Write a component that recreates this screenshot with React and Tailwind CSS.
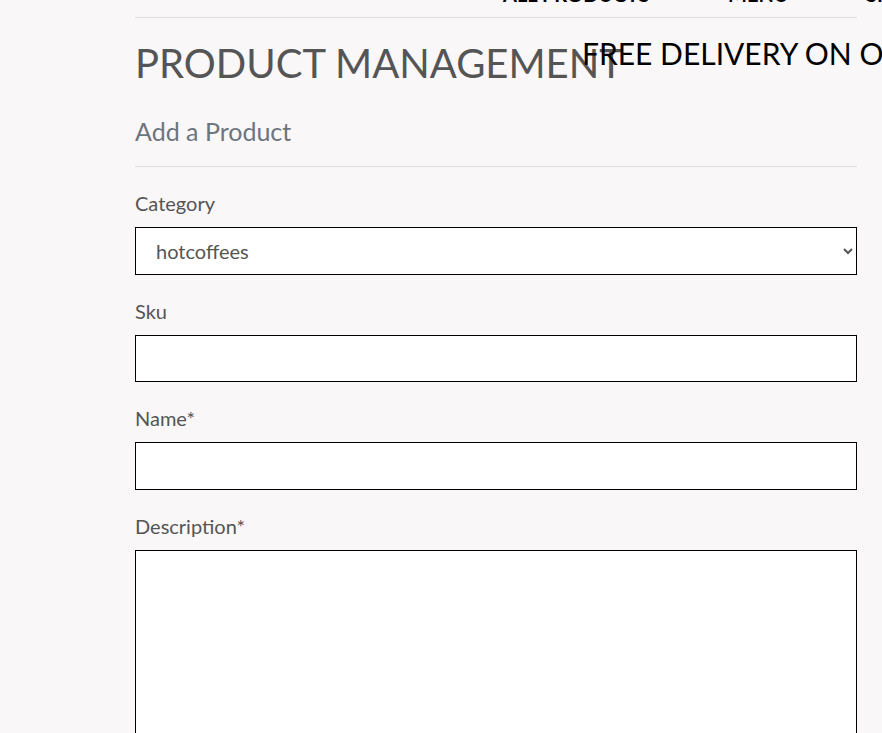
import { useState } from 'react'

const Field = ({ label, children }) => (
  <div className="mb-[22px]">
    <label className="block h-[28px] leading-[28px] mb-[10px] text-[20px] text-[#555]">{label}</label>
    {children}
  </div>
)

const App = () => {
  const [category, setCategory] = useState('hotcoffees')

  return (
    <div
      className="relative min-h-[733px] h-[733px] overflow-hidden bg-[#f9f7f8]"
      style={{ fontFamily: 'Lato, "Open Sans", sans-serif' }}
    >
      {/* delivery banner, overlapping the heading */}
      <div className="absolute left-[582px] top-[33px] whitespace-nowrap text-[30px] leading-[40px] text-black">
        FREE DELIVERY ON ORDERS OVER $50!
      </div>

      <div className="ml-[135px] w-[722px]">
        {/* Header nav (scrolled off the top) */}
        <div className="relative h-[18px] border-b border-[#dedede]">
          <div className="absolute -top-[18px] left-[368px] whitespace-nowrap text-[20px] leading-[24px] font-bold text-black">
            ALL PRODUCTS
          </div>
          <div className="absolute -top-[18px] left-[593px] whitespace-nowrap text-[20px] leading-[24px] font-bold text-black">
            MENU
          </div>
          <div className="absolute -top-[18px] left-[731px] whitespace-nowrap text-[20px] leading-[24px] font-bold text-black">
            SPECIAL OFFERS
          </div>
        </div>

        <h1 className="mt-[21px] text-[40px] leading-[48px] text-[#555] uppercase">Product Management</h1>
        <h5 className="mt-[29px] text-[25px] leading-[30px] text-[#6c757d]">Add a Product</h5>
        <hr className="mt-[20px] mb-[22px] border-t border-[#dedede]" />

        <form>
          <Field label="Category">
            <select
              value={category}
              onChange={(e) => setCategory(e.target.value)}
              className="w-full h-[48px] border border-black bg-white pl-[16px] pr-[8px] text-[20px] text-[#555] outline-none"
            >
              <option value="hotcoffees">hotcoffees</option>
              <option value="coldcoffees">coldcoffees</option>
              <option value="teas">teas</option>
            </select>
          </Field>
          <Field label="Sku">
            <input type="text" className="block w-full h-[47px] border border-black bg-white px-[20px] text-[20px] outline-none" />
          </Field>
          <Field label="Name*">
            <input type="text" className="block w-full h-[48px] border border-black bg-white px-[20px] text-[20px] outline-none" />
          </Field>
          <Field label="Description*">
            <textarea className="block w-full h-[260px] border border-black bg-white px-[20px] py-[10px] text-[20px] outline-none resize-none" />
          </Field>
        </form>
      </div>
    </div>
  )
}

export default App
